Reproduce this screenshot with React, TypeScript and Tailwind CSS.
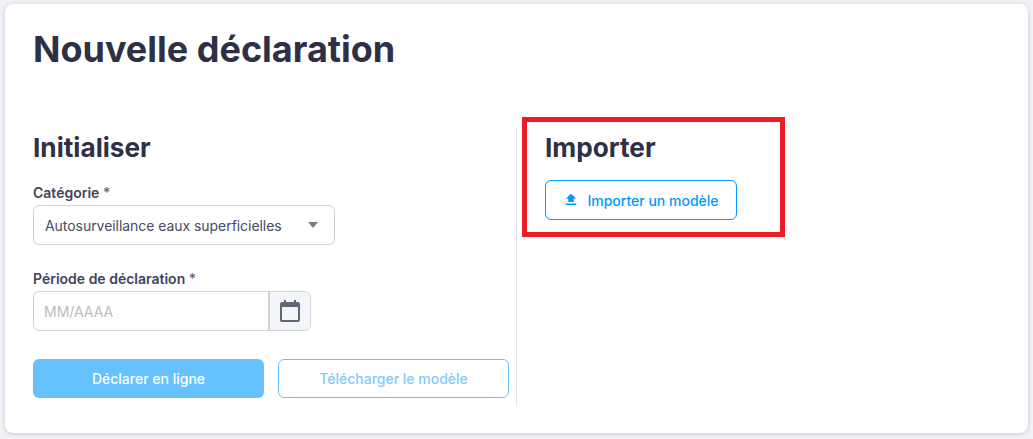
function CalendarIcon() {
  return (
    <svg width="24" height="24" viewBox="0 0 24 24" className="text-[#5f6774]">
      <path
        fill="currentColor"
        d="M20 3h-2V1h-2v2H8V1H6v2H4C3 3 2 3.9 2 5v16c0 1.1 1 2 2 2h16c1 0 2-.9 2-2V5c0-1.1-1-2-2-2zm0 18H4V8h16v13z"
      />
    </svg>
  );
}

function UploadIcon() {
  return (
    <svg width="14" height="14" viewBox="-1 0 14 14" className="text-[#0099ff]">
      <path fill="currentColor" d="M4.2 9V5.4H1.8L7 .8l5.2 4.6H9.8V9zM1.8 10.6h10.4V12H1.8z" />
    </svg>
  );
}

export default function App() {
  return (
    <div
      className="h-[439px] w-full overflow-hidden bg-[#f0f2f6] pl-[5px] pr-[5px] pt-[4px] text-[#2e3047]"
      style={{ fontFamily: 'Inter, "Noto Sans", sans-serif' }}
    >
      <div className="relative h-[429px] rounded-[8px] bg-white pl-[28px] pt-[25px] shadow-[0_1px_4px_rgba(40,50,80,0.22)]">
        <h1 className="text-[36px] font-bold leading-[41px]">Nouvelle déclaration</h1>

        <div className="mt-[57px] flex">
          <div className="h-[279px] w-[484px] border-r border-[#e3e4e8] pr-[7px] pt-[5px]">
            <h2 className="text-[26.2px] font-bold leading-[32px]">Initialiser</h2>

            <label className="mt-[20px] block text-[14px] font-semibold leading-[17px] text-[#41445a]">
              Catégorie <span className="font-medium text-[#636b78]">*</span>
            </label>
            <div className="mt-[4px] flex h-[40px] w-[302px] items-center justify-between rounded-[6px] border border-[#ced1d7] pl-[11px] pr-[16px] text-[14px] tracking-[-0.05px] text-[#484b5e]">
              <span>Autosurveillance eaux superficielles</span>
              <span className="h-0 w-0 border-x-[5.5px] border-t-[6px] border-x-transparent border-t-[#767c88]" />
            </div>

            <label className="mt-[25px] block text-[14px] font-semibold leading-[17px] text-[#41445a]">
              Période de déclaration <span className="font-medium text-[#636b78]">*</span>
            </label>
            <div className="mt-[4px] flex h-[40px] w-[278px] overflow-hidden rounded-[6px] border border-[#ced1d7]">
              <div className="flex flex-1 items-center pl-[10px] text-[14px] text-[#b9bcc4]">MM/AAAA</div>
              <div className="flex w-[42px] items-center justify-center border-l-2 border-[#ced1d7] bg-[#f4f5f9]">
                <CalendarIcon />
              </div>
            </div>

            <div className="mt-[28px] flex gap-[14px]">
              <button className="h-[39px] w-[231px] rounded-[6px] bg-[#66c2ff] text-[14px] font-medium text-white">
                Déclarer en ligne
              </button>
              <button className="h-[39px] w-[231px] rounded-[6px] border border-[#66c2ff] bg-white text-[14px] font-medium text-[#80ccff]">
                Télécharger le modèle
              </button>
            </div>
          </div>

          <div className="pl-[28px] pt-[5px]">
            <h2 className="text-[26.2px] font-bold leading-[32px]">Importer</h2>
            <button className="mt-[16px] flex h-[40px] w-[192px] items-center justify-center gap-[10px] rounded-[6px] border border-[#0099ff] bg-white text-[14px] font-medium text-[#0099ff]">
              <UploadIcon />
              Importer un modèle
            </button>
          </div>
        </div>

        <div className="absolute left-[517px] top-[113px] h-[120px] w-[263px] border-[5px] border-[#ed1c24]" />
      </div>
    </div>
  );
}
